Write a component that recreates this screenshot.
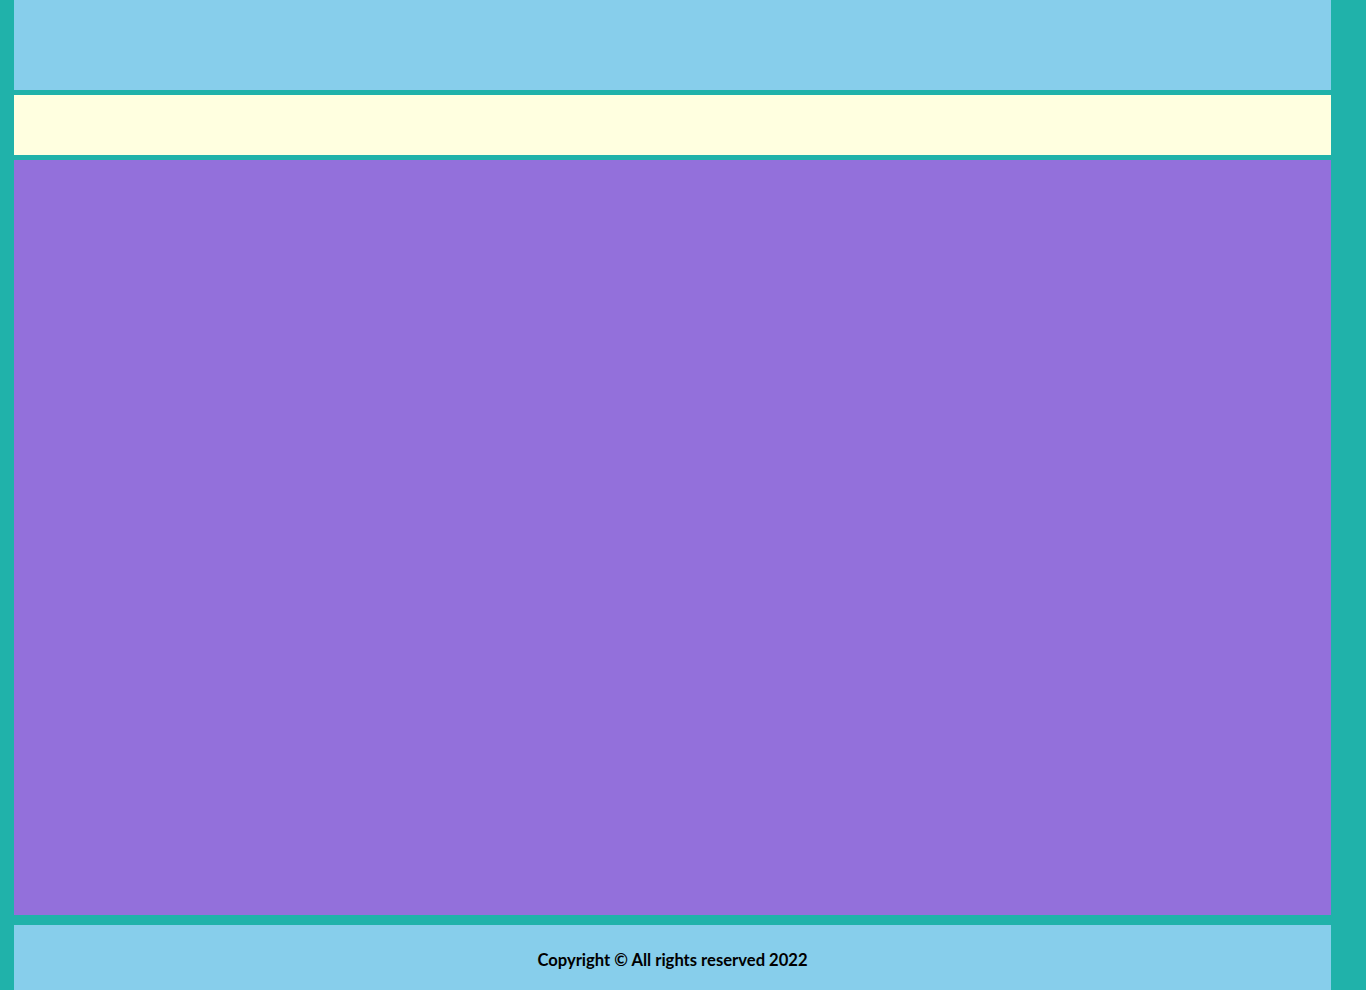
import React from 'react';

const App = () => {
  return (
    <div className="min-h-screen w-full bg-[#20b2aa] pl-[14px] pr-[35px]">
      <header className="h-[90px] bg-[#87ceeb]" />
      <nav className="mt-[5px] h-[60px] bg-[#ffffe0]" />
      <main className="mt-[5px] h-[755px] bg-[#9370db]" />
      <footer className="mt-[10px] h-[80px] bg-[#87ceeb] pt-[25px] text-center">
        <p className="font-['Lato',sans-serif] text-[16.6px] font-bold leading-[20px] text-black">
          Copyright © All rights reserved 2022
        </p>
      </footer>
    </div>
  );
};

export default App;
